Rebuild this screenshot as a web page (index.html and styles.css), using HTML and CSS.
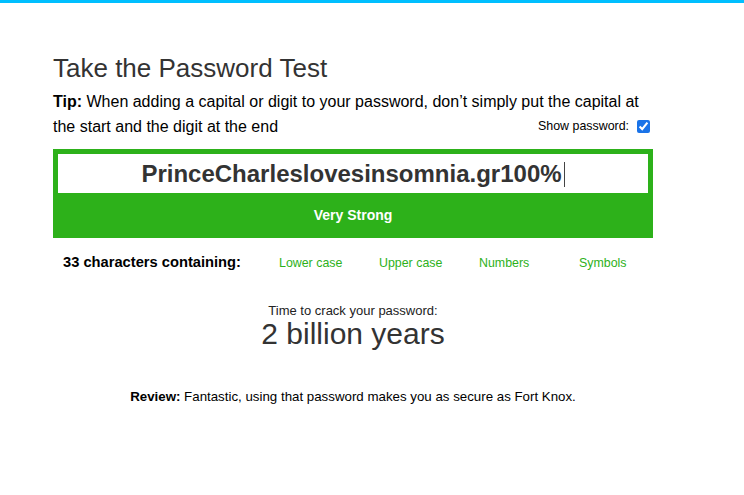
FILE: index.html
```html
<!DOCTYPE html>
<html lang="en">
<head>
    <meta charset="UTF-8" />
    <meta name="viewport" content="width=device-width, initial-scale=1.0" />
    <title>Take the Password Test</title>
    <link rel="stylesheet" href="styles.css">
</head>
<body>
    <div class="topbar"></div>
    <div class="container">
        <h2>Take the Password Test</h2>
        <div class="tip">
            <div class="tip-line"><b>Tip:</b> When adding a capital or digit to your password, don’t simply put the capital at</div>
            <div class="tip-row">
                <span class="tip-line">the start and the digit at the end</span>
                <label class="show">Show password: <input type="checkbox" checked></label>
            </div>
        </div>

        <div class="meter">
            <div class="field">PrinceCharleslovesinsomnia.gr100%<span class="caret"></span></div>
            <div class="strength">Very Strong</div>
        </div>

        <div class="contains">
            <div class="count">33 characters containing:</div>
            <div class="kind">Lower case</div>
            <div class="kind">Upper case</div>
            <div class="kind">Numbers</div>
            <div class="kind last">Symbols</div>
        </div>

        <div class="crack">
            <div class="crack-label">Time to crack your password:</div>
            <div class="crack-time">2 billion years</div>
        </div>

        <p class="review"><b>Review:</b> Fantastic, using that password makes you as secure as Fort Knox.</p>
    </div>
</body>
</html>
```

FILE: styles.css
```css
body {
    margin: 0;
    font-family: "Liberation Sans", Arial, sans-serif;
    background: #ffffff;
    color: #000;
}
.topbar {
    height: 3px;
    background: #00bfff;
}
.container {
    width: 600px;
    margin-left: 53px;
    padding-top: 50px;
}
h2 {
    font-size: 26px;
    font-weight: normal;
    color: #333;
    margin: 0 0 6px;
    line-height: 30px;
}
.tip {
    font-size: 16px;
    line-height: 25px;
    margin: 0 0 10px;
}
.tip-row {
    display: flex;
    justify-content: space-between;
    align-items: center;
}
.show {
    margin-right: 3px;
    font-size: 12.4px;
    display: flex;
    align-items: center;
    gap: 8px;
}
.show input {
    margin: 0;
    width: 13px;
    height: 13px;
    accent-color: #1a73e8;
}
.meter {
    background: #2db11a;
    padding: 5px 5px 0;
}
.field {
    background: #fff;
    height: 39px;
    line-height: 39px;
    text-align: center;
    font-size: 24px;
    font-weight: bold;
    color: #333;
}
.caret {
    display: inline-block;
    width: 1px;
    height: 25px;
    background: #444;
    vertical-align: -5px;
    margin-left: 2px;
}
.strength {
    color: #fff;
    font-weight: bold;
    font-size: 14px;
    text-align: center;
    line-height: 45px;
}
.contains {
    display: flex;
    align-items: baseline;
    padding: 16px 0 0 10px;
    font-size: 12.4px;
}
.count {
    flex: 0 0 216px;
    font-weight: bold;
    font-size: 14.7px;
}
.kind {
    flex: 0 0 100px;
    color: #2db11a;
}
.kind.last {
    flex: 0 0 auto;
}
.crack {
    text-align: center;
    margin-top: 33px;
    color: #222;
}
.crack-label {
    font-size: 13px;
}
.crack-time {
    font-size: 30px;
    line-height: 32px;
    color: #333;
}
.review {
    text-align: center;
    font-size: 13.3px;
    margin-top: 39px;
}
```
